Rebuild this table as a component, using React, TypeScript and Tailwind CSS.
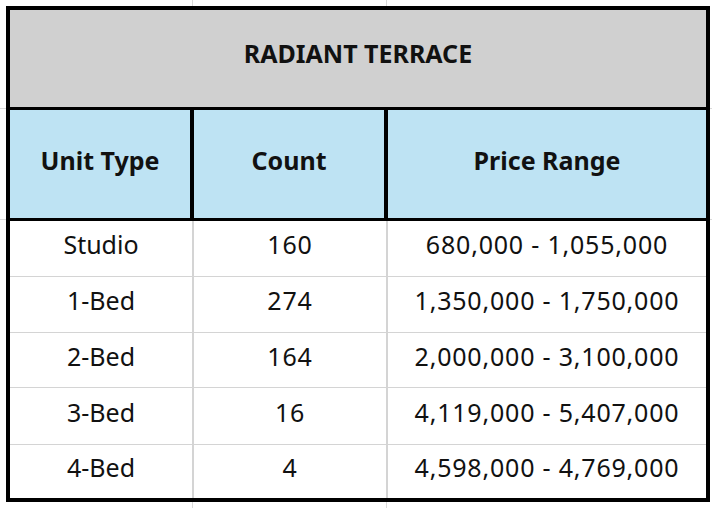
import React from 'react';

interface UnitRow {
  type: string;
  count: string;
  range: string;
  h: string;
}

const rows: UnitRow[] = [
  { type: 'Studio', count: '160', range: '680,000 - 1,055,000', h: 'h-[56px]' },
  { type: '1-Bed', count: '274', range: '1,350,000 - 1,750,000', h: 'h-[56px]' },
  { type: '2-Bed', count: '164', range: '2,000,000 - 3,100,000', h: 'h-[55px]' },
  { type: '3-Bed', count: '16', range: '4,119,000 - 5,407,000', h: 'h-[57px]' },
  { type: '4-Bed', count: '4', range: '4,598,000 - 4,769,000', h: 'h-[53px]' },
];

const App: React.FC = () => {
  return (
    <div className="relative w-[712px] h-[508px] bg-white overflow-hidden font-['Noto_Sans',sans-serif] text-[#111] text-[25px]">
      {/* faint spreadsheet gridlines peeking around the table */}
      <div className="absolute left-[192px] top-0 w-px h-full bg-[#dadada]" />
      <div className="absolute left-[386px] top-0 w-px h-full bg-[#dadada]" />
      <div className="absolute left-0 top-[108px] w-full h-px bg-[#dadada]" />
      <div className="absolute left-0 top-[219px] w-full h-px bg-[#dadada]" />

      <div className="relative ml-[6px] mt-[6px] w-[704px] h-[496px] border-4 border-black flex flex-col bg-white">
        {/* Title */}
        <div className="h-[100px] pb-[10px] bg-[#d0d0d0] border-b-[3px] border-black flex items-center justify-center font-bold">
          RADIANT TERRACE
        </div>

        {/* Header */}
        <div className="h-[111px] bg-[#bee3f3] border-b-[3px] border-black grid grid-cols-[184px_194px_1fr] font-bold">
          <div className="flex items-center justify-center pb-[7px] border-r-4 border-black">Unit Type</div>
          <div className="flex items-center justify-center pb-[7px] border-r-4 border-black">Count</div>
          <div className="flex items-center justify-center pb-[7px]">Price Range</div>
        </div>

        {/* Body */}
        {rows.map((r, i) => (
          <div
            key={r.type}
            className={`${r.h} grid grid-cols-[184px_194px_1fr] ${
              i < rows.length - 1 ? 'border-b border-[#d4d4d4]' : ''
            }`}
          >
            <div className="flex items-center justify-center pb-[7px] border-r-2 border-[#d4d4d4]">{r.type}</div>
            <div className="flex items-center justify-center pb-[7px] border-r-2 border-[#d4d4d4] tracking-[0.8px]">
              {r.count}
            </div>
            <div className="flex items-center justify-center pb-[7px] tracking-[0.8px]">{r.range}</div>
          </div>
        ))}
      </div>
    </div>
  );
};

export default App;
